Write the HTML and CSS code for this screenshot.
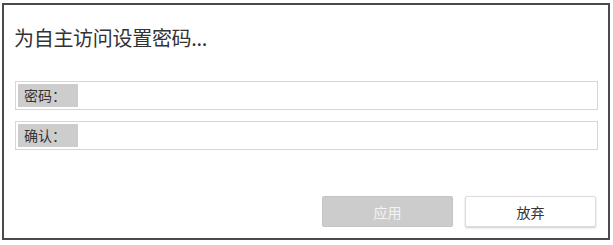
FILE: index.html
```html
<!DOCTYPE html>
<html lang="zh">
<head>
<meta charset="utf-8">
<link rel="stylesheet" href="styles.css">
</head>
<body>
<div class="dialog">
  <div class="title">为自主访问设置密码...</div>
  <div class="fields">
    <div class="field"><span class="label">密码：</span></div>
    <div class="field"><span class="label">确认：</span></div>
  </div>
  <div class="actions">
    <button class="btn btn-apply">应用</button>
    <button class="btn btn-cancel">放弃</button>
  </div>
</div>
</body>
</html>
```
FILE: styles.css
```css
html, body {
  margin: 0;
  padding: 0;
  background: #fff;
}
body {
  font-family: "Noto Sans CJK SC", "Microsoft YaHei", sans-serif;
  color: #333;
}
.dialog {
  box-sizing: border-box;
  margin: 3px 0 0 2px;
  width: 608px;
  height: 237px;
  border: 2px solid #4a4a4a;
  padding: 0 10px 0 11px;
  display: flex;
  flex-direction: column;
}
.title {
  font-size: 20px;
  line-height: 28px;
  margin-top: 19px;
  margin-left: -1px;
  color: #333;
  letter-spacing: -0.3px;
}
.fields {
  margin-top: 29px;
  display: flex;
  flex-direction: column;
  gap: 11px;
}
.field {
  box-sizing: border-box;
  height: 29px;
  border: 1px solid #d6d6d6;
  padding: 2px;
  display: flex;
}
.label {
  width: 60px;
  background: #cdcdcd;
  font-size: 14px;
  line-height: 23px;
  padding-left: 6px;
  box-sizing: border-box;
  color: #333;
}
.actions {
  margin-top: auto;
  margin-bottom: 11px;
  display: flex;
  justify-content: flex-end;
  gap: 12px;
  padding-right: 2px;
}
.btn {
  box-sizing: border-box;
  width: 131px;
  height: 31px;
  font-family: inherit;
  font-size: 14px;
  border-radius: 2px;
}
.btn-apply {
  background: #cccccc;
  border: 1px solid #c4c4c4;
  color: #f4f4f4;
}
.btn-cancel {
  background: #fff;
  border: 1px solid #dcdcdc;
  color: #333;
  box-shadow: 0 1px 2px rgba(0,0,0,0.2);
}
```
